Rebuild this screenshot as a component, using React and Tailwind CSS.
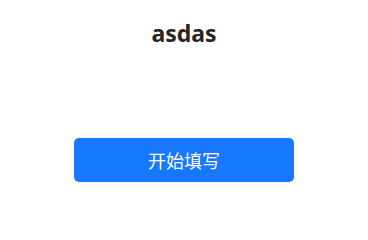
export default function App() {
  return (
    <div className="w-[368px] h-[200px] bg-white flex flex-col items-center font-['Noto_Sans','Noto_Sans_CJK_SC',sans-serif]">
      <h1 className="mt-[17px] text-[23px] leading-[32px] font-bold text-[#262626]">asdas</h1>
      <button className="mt-[89px] w-[220px] h-[44px] rounded-[5px] bg-[#1677ff] text-white text-[18px] font-['Noto_Sans_CJK_SC',sans-serif]">
        开始填写
      </button>
    </div>
  );
}
